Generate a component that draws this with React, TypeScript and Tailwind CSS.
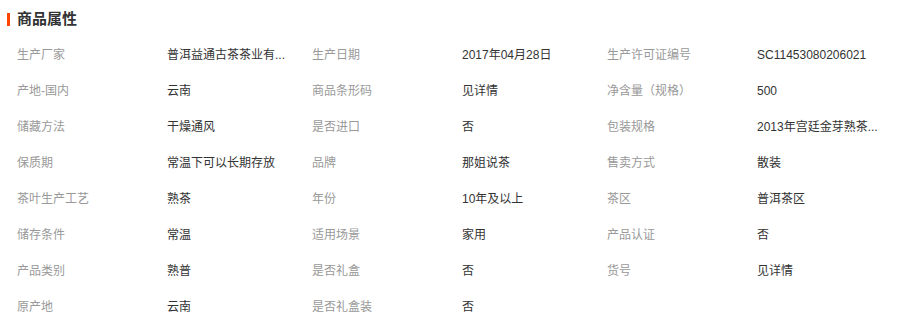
const rows: [string, string][] = [
  ['生产厂家', '普洱益通古茶茶业有...'],
  ['生产日期', '2017年04月28日'],
  ['生产许可证编号', 'SC11453080206021'],
  ['产地-国内', '云南'],
  ['商品条形码', '见详情'],
  ['净含量（规格）', '500'],
  ['储藏方法', '干燥通风'],
  ['是否进口', '否'],
  ['包装规格', '2013年宫廷金芽熟茶...'],
  ['保质期', '常温下可以长期存放'],
  ['品牌', '那姐说茶'],
  ['售卖方式', '散装'],
  ['茶叶生产工艺', '熟茶'],
  ['年份', '10年及以上'],
  ['茶区', '普洱茶区'],
  ['储存条件', '常温'],
  ['适用场景', '家用'],
  ['产品认证', '否'],
  ['产品类别', '熟普'],
  ['是否礼盒', '否'],
  ['货号', '见详情'],
  ['原产地', '云南'],
  ['是否礼盒装', '否'],
];

export default function App() {
  return (
    <div className="w-[898px] h-[329px] bg-white font-['Liberation_Sans','Noto_Sans_CJK_SC',sans-serif]">
      <div className="h-9 pt-[2px] flex items-center">
        <span className="ml-[7px] w-[3px] h-[13px] bg-[#ff4400]" />
        <h3 className="ml-[7px] text-[15px] font-bold text-[#333]">商品属性</h3>
      </div>

      <ul className="pl-[17px] pt-[1px] grid grid-cols-[repeat(3,295px)]">
        {rows.map(([label, value]) => (
          <li key={label} className="h-9 flex items-center text-xs">
            <span className="w-[150px] text-[#999]">{label}</span>
            <span className="whitespace-nowrap text-[#333]">{value}</span>
          </li>
        ))}
      </ul>
    </div>
  );
}
